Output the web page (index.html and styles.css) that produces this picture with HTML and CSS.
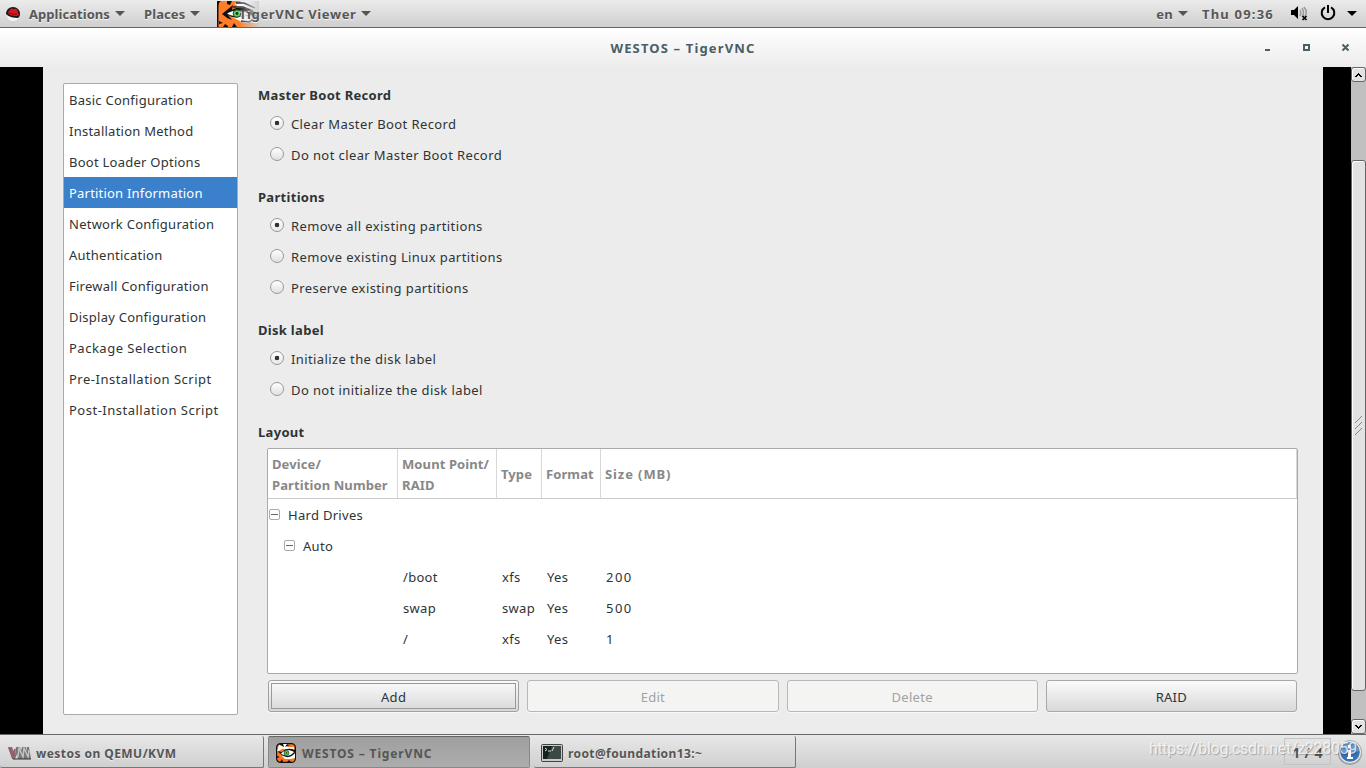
FILE: index.html
```html
<!DOCTYPE html>
<html lang="en">
  <head>
    <meta charset="UTF-8" />
    <meta name="viewport" content="width=device-width, initial-scale=1.0" />
    <title>WESTOS - TigerVNC</title>
    <link rel="stylesheet" href="styles.css">
  </head>
  <body>
    <div class="top-bar">
      <div class="menu menu-apps">
        <svg class="hat" width="16" height="16" viewBox="0 0 16 16">
          <path d="M2 10h12q-1 5-6 5t-6-5z" fill="#f4f4f4" />
          <path d="M1 8C1 4 4 1 8 1s7 3 7 7c0 2-1 3-2 4-4 0-9-1-12-4z" fill="#181818" />
          <path d="M4 5c1-3 3-3 5-2 2-1 4 0 4 4 2 1 1 3-2 3-4 0-8-1-8-4z" fill="#d71920" />
          <path d="M4 6.500c2 1.500 5 2 8 1.500" fill="none" stroke="#7d0c12" />
        </svg>
        <span class="apps-text">Applications</span><i class="arrow"></i>
      </div>
      <div class="menu menu-places"><span class="places-text">Places</span><i class="arrow"></i></div>
      <div class="menu menu-viewer">
        <svg class="tiger-big" width="42" height="26" viewBox="0 0 42 26">
          <defs>
            <linearGradient id="fade" x1="0" x2="1"><stop offset="0.5" stop-color="#d8d8d8" stop-opacity="0" /><stop offset="1" stop-color="#d0d0d0" stop-opacity="0.95" /></linearGradient>
          </defs>
          <rect width="42" height="26" fill="#ff7c28" />
          <path d="M0 0h4Q1.500 1 1.500 6v20H0zM10 0h5l-2 4-3-1zM6 26l2-3 3 2v1zM15 26l2-4 3 4zM2 20l4 2-4 1z" fill="#111" />
          <path d="M17 3l8-3h17v17l-6 4q-8 3-15-2l-6-3 5-12z" fill="#fff" />
          <path d="M5 13l11-9-1 5c7-4 16-3 24 3l3 5c-8-5-12-2-20-1-4 1-8 0-11-2l4 5q-6-2-10-6z" fill="#111" />
          <path d="M10 12.500c7-4 15-4 23 1-8 3-16 3-23-1z" fill="#fff" />
          <path d="M16 6l10 0 10 4M19 2l8 0 11 5M24 20l8 1 6-4" fill="none" stroke="#222" stroke-width="1.6" />
          <circle cx="20" cy="12.500" r="3.800" fill="#5fd05c" stroke="#173b18" />
          <circle cx="20" cy="12.500" r="1.400" fill="#123912" />
          <rect width="42" height="26" fill="url(#fade)" />
        </svg>
        <span class="viewer-text">TigerVNC Viewer</span><i class="arrow"></i>
      </div>
      <div class="status">
        <span class="lang">en</span><i class="arrow"></i>
        <span class="clock">Thu 09:36</span>
        <svg class="volume" width="18" height="16" viewBox="0 0 18 16">
          <path d="M1 5h3l4-4v13l-4-4H1z" fill="#000" />
          <path d="M10 5q1.5 3 0 6M12 3q3 5 0 9M14 2q4 5 1 9" fill="none" stroke="#999" stroke-width="1.5" />
          <path d="M12.5 11l4 4m0-4l-4 4" stroke="#000" stroke-width="1.7" />
        </svg>
        <svg class="power" width="16" height="16" viewBox="0 0 16 16">
          <path d="M5 2.300a6.300 6.300 0 1 0 6 0M8 0v8" fill="none" stroke="#000" stroke-width="2" />
        </svg>
        <i class="arrow dark"></i>
      </div>
    </div>

    <div class="title-bar">
      <span class="window-title">WESTOS – TigerVNC</span>
      <div class="window-buttons">
        <svg width="86" height="10" viewBox="0 0 86 10" fill="none" stroke="#4a5e66" stroke-width="2">
          <path d="M1 7h5M40 2h5v5h-5zM78.500 1.500l6 6m0-6l-6 6" />
        </svg>
      </div>
    </div>

    <div class="viewer">
      <div class="screen">
        <ul class="sidebar">
          <li>Basic Configuration</li>
          <li>Installation Method</li>
          <li>Boot Loader Options</li>
          <li class="selected">Partition Information</li>
          <li>Network Configuration</li>
          <li>Authentication</li>
          <li>Firewall Configuration</li>
          <li>Display Configuration</li>
          <li class="wide">Package Selection</li>
          <li class="wide">Pre-Installation Script</li>
          <li class="wide">Post-Installation Script</li>
        </ul>

        <div class="content">
          <div class="group">
            <h2>Master Boot Record</h2>
            <div class="option"><i class="radio checked"></i><span>Clear Master Boot Record</span></div>
            <div class="option"><i class="radio"></i><span>Do not clear Master Boot Record</span></div>
          </div>
          <div class="group">
            <h2>Partitions</h2>
            <div class="option"><i class="radio checked"></i><span>Remove all existing partitions</span></div>
            <div class="option"><i class="radio"></i><span>Remove existing Linux partitions</span></div>
            <div class="option"><i class="radio"></i><span>Preserve existing partitions</span></div>
          </div>
          <div class="group">
            <h2>Disk label</h2>
            <div class="option"><i class="radio checked"></i><span>Initialize the disk label</span></div>
            <div class="option"><i class="radio"></i><span>Do not initialize the disk label</span></div>
          </div>
          <h2>Layout</h2>

          <div class="table">
            <div class="row head">
              <span>Device/<br>Partition Number</span>
              <span>Mount Point/<br>RAID</span>
              <span>Type</span>
              <span>Format</span>
              <span class="size">Size (MB)</span>
            </div>
            <div class="row tree"><i class="expander"></i>Hard Drives</div>
            <div class="row tree child"><i class="expander"></i>Auto</div>
            <div class="row"><span></span><span>/boot</span><span>xfs</span><span>Yes</span><span class="number">200</span></div>
            <div class="row"><span></span><span>swap</span><span>swap</span><span>Yes</span><span class="number">500</span></div>
            <div class="row"><span></span><span>/</span><span>xfs</span><span>Yes</span><span class="number">1</span></div>
          </div>

          <div class="buttons">
            <div class="button focused">Add</div>
            <div class="button disabled">Edit</div>
            <div class="button disabled">Delete</div>
            <div class="button">RAID</div>
          </div>
        </div>
      </div>

      <div class="scrollbar">
        <div class="scroll-button"><svg width="7" height="4" viewBox="0 0 7 4"><path d="M3 0h1v1h1v1h1v1h1v1H5V3H4V2H3v1H2v1H0V3h1V2h1V1h1z" /></svg></div>
        <div class="thumb"><svg width="8" height="20" viewBox="0 0 8 20" fill="none" stroke="#888"><path d="M0 7l7-7M0 13l7-7M0 19l7-7" /></svg></div>
        <div class="scroll-button down"><svg width="7" height="4" viewBox="0 0 7 4"><path d="M0 0h2v1h1v1h1V1h1V0h2v1H6v1H5v1H4v1H3V3H2V2H1V1H0z" /></svg></div>
      </div>
    </div>

    <div class="task-bar">
      <div class="task">
        <svg width="24" height="14" viewBox="0 0 24 14">
          <path d="M0 1h4l3 7 1-7h4l1 4 1-4h4l1 5 0-5h2l2 12H10l-1-5-2 5H4z" fill="#777" />
          <path d="M1 2l4 9 2-8" fill="none" stroke="#aa5260" stroke-width="1.5" />
          <path d="M10 11l1-9 4 9 1-9 4 9 1-7" fill="none" stroke="#c5c5c5" stroke-width="1.4" />
          <path d="M5 13h18" stroke="#333" />
        </svg>
        <span class="task-kvm">westos on QEMU/KVM</span>
      </div>
      <div class="task active">
        <svg width="20" height="20" viewBox="0 0 20 20">
          <rect x="0.600" y="0.600" width="18.800" height="18.800" rx="4" fill="#ff7621" stroke="#111" stroke-width="1.2" />
          <path d="M3 2l5 2-1-3h6l-2 3h7v3l-6-1-6 0-5 3z" fill="#fff" />
          <path d="M3 1l5 3-1-3zM11 1l-2 3 5-2zM1 13l3 1-3 1zM4 19l2-3 1 3zM11 19l2-2 2 2z" fill="#111" />
          <path d="M6 13l13-2v4l-4 1-6 0z" fill="#fff" />
          <path d="M1 8l5 1c4-4 8-4 13-2v2c-2 5-8 7-13 3z" fill="#111" />
          <path d="M5 10.500c4-4 9-4 13-1.500-3 4-8 5-13 1.500z" fill="#fff" />
          <circle cx="10.500" cy="10" r="2.400" fill="#62d65e" stroke="#174b19" stroke-width="0.8" />
          <circle cx="10.500" cy="10" r="0.800" fill="#10320f" />
        </svg>
        <span class="task-vnc">WESTOS – TigerVNC</span>
      </div>
      <div class="task terminal">
        <svg width="22" height="19" viewBox="0 0 22 19">
          <rect x="0.500" y="0.500" width="21" height="17" rx="1" fill="#c9cbc7" stroke="#444" />
          <rect x="2" y="2" width="18" height="13" fill="#172220" />
          <path d="M11 2h9v13H6z" fill="#3b4945" />
          <path d="M4 4l2 1.500L4 7m3 0h3m1 0l2-4" fill="none" stroke="#ddd" />
          <path d="M1 17.500h20" stroke="#444" />
        </svg>
        <span class="task-root">root@foundation13:~</span>
      </div>
      <div class="tray">
        <span class="workspace">1 / 4</span>
        <svg class="info" width="26" height="26" viewBox="0 0 26 26">
          <circle cx="13" cy="14" r="12" fill="#999" />
          <circle cx="13" cy="13" r="11.500" fill="#eee" stroke="#aaa" />
          <circle cx="13" cy="13" r="9.800" fill="#3873b8" />
          <path d="M4 12a9 9 0 0 1 18 0q-9 4-18 0z" fill="#6c9bd0" />
          <path d="M10 11h4v7h2v2h-6v-2h1v-5h-1zM11 6h3v3h-3z" fill="#fff" />
        </svg>
      </div>
      <span class="watermark">https://blog.csdn.net/z228059</span>
    </div>
  </body>
</html>
```

FILE: styles.css
```css
* {
  box-sizing: border-box;
}

body {
  margin: 0;
  height: 768px;
  display: flex;
  flex-direction: column;
  overflow: hidden;
  background: #ececec;
  color: #2e3436;
  font-family: 'Noto Sans', 'Open Sans', sans-serif;
  font-size: 13px;
  letter-spacing: 0.3px;
  white-space: nowrap;
}

svg {
  display: block;
  flex: none;
}

/* Top bar */
.top-bar {
  height: 28px;
  flex: none;
  display: flex;
  align-items: center;
  border-bottom: 1px solid #666;
  background: linear-gradient(#ebebeb, #cfcfcf);
  color: #575757;
  font-weight: bold;
  text-shadow: 0 1px #f2f2f2;
}

.menu,
.status {
  display: flex;
  align-items: center;
}

.menu-apps {
  width: 144px;
  padding-left: 5px;
}

.hat {
  margin-right: 8px;
}

.apps-text {
  letter-spacing: 0.05px;
}

.places-text {
  letter-spacing: 0.1px;
}

.menu-places {
  width: 73px;
}

.arrow {
  margin: -1px 0 0 5px;
  border: 5px solid transparent;
  border-top-color: #555;
  border-bottom: 0;
}

.arrow.dark {
  border-top-color: #000;
  margin-left: 11px;
}

.tiger-big {
  align-self: flex-start;
}

.viewer-text {
  position: relative;
  margin-left: -20px;
  letter-spacing: 0.6px;
}

.status {
  margin-left: auto;
  padding-right: 9px;
}

.clock {
  margin: 0 16px 0 14px;
  letter-spacing: 1.2px;
}

.power {
  margin-left: 12px;
}

.volume {
  margin-top: -1px;
}

.power {
  margin-top: -2px;
}

/* Window title */
.title-bar {
  height: 39px;
  flex: none;
  display: flex;
  align-items: center;
  justify-content: center;
  position: relative;
  background: linear-gradient(#fff, #ececec);
  color: #4a5e66;
  font-weight: bold;
}

.window-title {
  letter-spacing: 1.150px;
}

.window-buttons {
  position: absolute;
  right: 16px;
  top: 15px;
}

/* Remote screen */
.viewer {
  height: 667px;
  flex: none;
  display: flex;
  background: #000;
  padding-left: 43px;
}

.screen {
  width: 1280px;
  display: flex;
  padding: 13px 25px 0 20px;
  background: #ececec;
}

.sidebar {
  width: 175px;
  height: 632px;
  margin: 3px 20px 0 0;
  padding: 0;
  list-style: none;
  background: #fff;
  border: 1px solid #aaa;
  border-radius: 2px;
}

.sidebar li {
  height: 31px;
  line-height: 33px;
  padding-left: 5px;
  letter-spacing: 0.25px;
}

.sidebar li.wide {
  letter-spacing: 0.5px;
}

.sidebar .selected {
  background: #3a80cb;
  color: #fff;
  letter-spacing: 0.2px;
}

.content {
  width: 1040px;
}

.group {
  margin-bottom: 11px;
}

h2 {
  margin: 0;
  height: 29px;
  line-height: 30px;
  font-size: 13px;
}

.option {
  height: 31px;
  display: flex;
  align-items: center;
  padding-left: 12px;
}

.option span {
  line-height: 31px;
  letter-spacing: 0.4px;
}

.radio {
  width: 14px;
  height: 14px;
  margin: -3px 7px 0 0;
  border: 1px solid #999;
  border-radius: 50%;
  background: linear-gradient(#fff, #e0e0e0);
}

.radio.checked {
  background: radial-gradient(circle, #2e3436 0 2px, transparent 2.600px), linear-gradient(#fff, #e8e8e8);
}

/* Partition table */
.table {
  height: 226px;
  margin: 2px 0 0 9px;
  background: #fff;
  border: 1px solid #aaa;
  border-radius: 2px;
}

.row {
  height: 31px;
  display: grid;
  grid-template-columns: 130px 99px 45px 59px 1fr;
  align-items: center;
}

.row span {
  padding-left: 5px;
}

.row .number {
  letter-spacing: 1.500px;
}

.row.head {
  height: 50px;
  border-bottom: 1px solid #ccc;
  color: #888;
  font-weight: bold;
  line-height: 21px;
  letter-spacing: 0.1px;
}

.row.head span {
  height: 49px;
  display: flex;
  align-items: center;
  padding: 2px 0 0 4px;
  border-right: 1px solid #d8d8d8;
}

.row.head .size {
  letter-spacing: 0.9px;
}

.row.tree {
  display: flex;
  padding-left: 1px;
}

.row.tree.child {
  padding-left: 16px;
}

.expander {
  width: 11px;
  height: 11px;
  margin: -1px 8px 0 0;
  border: 1px solid #aaa;
  border-radius: 2px;
  background: linear-gradient(#666, #666) center / 7px 1px no-repeat;
}

.buttons {
  margin: 6px 1px 0 10px;
  display: grid;
  grid-template-columns: repeat(4, 1fr);
  gap: 8px;
}

.button {
  height: 32px;
  line-height: 32px;
  text-align: center;
  border: 1px solid #a8a8a8;
  border-radius: 3px;
  background: linear-gradient(#fbfbfb, #d8d8d8);
  box-shadow: 0 1px #f8f8f8;
}

.button.focused {
  border-color: #a0a0a0;
  outline: 1px solid #999;
  outline-offset: -4px;
}

.button.disabled {
  background: #f4f4f2;
  border-color: #b8b8b8;
  color: #a0a3a3;
}

/* Scrollbar */
.scrollbar {
  width: 15px;
  margin-left: 28px;
  display: flex;
  flex-direction: column;
  background: #c0c0c0;
}

.scroll-button,
.thumb {
  height: 15px;
  display: flex;
  align-items: center;
  justify-content: center;
  border: 1px solid #666;
  border-radius: 3px;
  background: #e2e2e2;
  box-shadow: inset 1px 1px #fff;
}

.thumb {
  height: 531px;
  margin-top: 78px;
}

.scroll-button.down {
  margin-top: auto;
}

/* Task bar */
.task-bar {
  height: 34px;
  flex: none;
  position: relative;
  display: flex;
  gap: 4px;
  border-top: 1px solid #666;
  background: linear-gradient(#e8e8e8, #cfcfcf);
  color: #555;
  font-weight: bold;
  font-size: 12px;
}

.task {
  width: 262px;
  height: 32px;
  margin-top: 1px;
  display: flex;
  align-items: center;
  padding: 3px 0 0 7px;
  border: solid #777;
  border-width: 0 1px 1px 0;
  border-radius: 2px;
  text-shadow: 0 1px #eee;
}

.task:first-child {
  width: 264px;
  padding-left: 8px;
}

.task span {
  margin-left: 5px;
}

.task .task-kvm {
  margin-left: 4px;
  letter-spacing: 0.450px;
}

.task .task-vnc {
  margin-left: 6px;
  letter-spacing: 0.850px;
}

.task .task-root {
  letter-spacing: 0.4px;
}

.task.active {
  padding-top: 2px;
  border: 1px solid #888;
  border-top-color: #666;
  background: linear-gradient(#9f9f9f, #adadad);
  text-shadow: none;
}

.tray {
  margin-left: auto;
  padding-right: 3px;
  display: flex;
  align-items: center;
}

.workspace {
  width: 47px;
  height: 27px;
  margin-right: 6px;
  line-height: 27px;
  text-align: center;
  font-size: 14px;
  border: 1px solid #c4c4c4;
}

/* Faint site address over the tray */
.watermark {
  position: absolute;
  right: 9px;
  top: 4px;
  color: rgba(255, 255, 255, 0.75);
  font: 16px/20px 'Roboto', 'Liberation Sans', sans-serif;
  letter-spacing: -0.3px;
  text-shadow: 1px 1px 1px rgba(0, 0, 0, 0.25);
}
```
